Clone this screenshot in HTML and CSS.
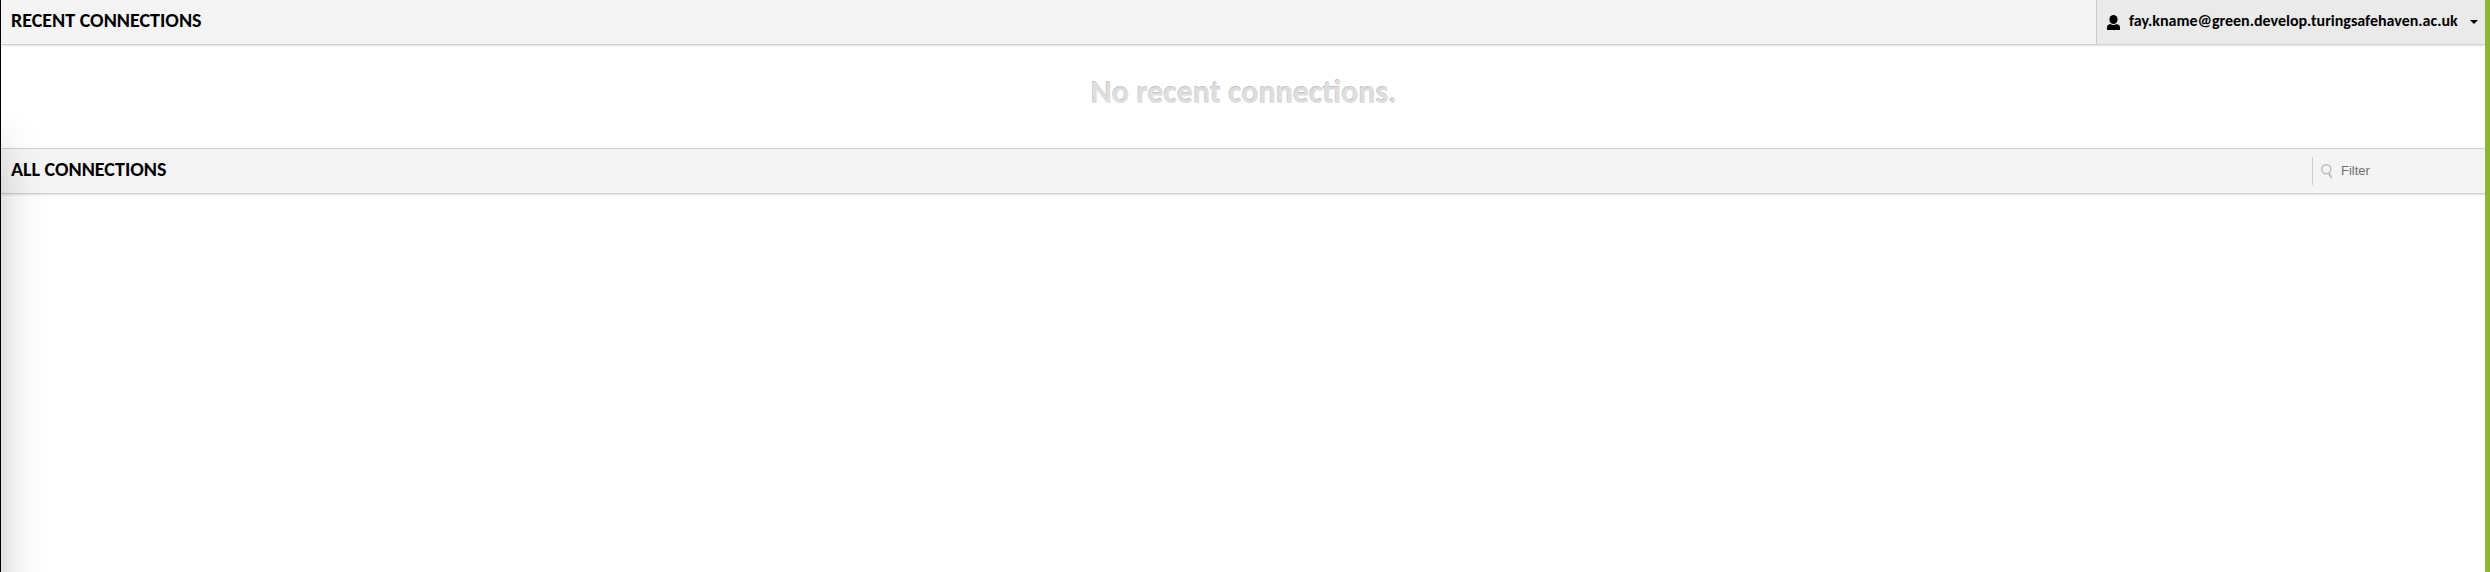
FILE: index.html
```
<!DOCTYPE html>
<html lang="en">
<head>
<meta charset="utf-8">
<title>Connections</title>
<link rel="stylesheet" href="styles.css">
</head>
<body>
<div class="page">
  <header class="header header-recent">
    <h2 class="title">RECENT CONNECTIONS</h2>
    <div class="user-menu">
      <svg class="user-icon" viewBox="0 0 13 15"><ellipse cx="6.5" cy="4.5" rx="4.1" ry="4.5"/><path d="M0 15V12.4C0 10.4 1.4 9.3 3.4 9C5.2 10.2 7.8 10.2 9.6 9C11.6 9.3 13 10.4 13 12.4V15Z"/></svg>
      <span class="user-name">fay.kname@green.develop.turingsafehaven.ac.uk</span>
      <svg class="caret" viewBox="0 0 8 4"><path d="M0 0H8L4 4Z"/></svg>
    </div>
  </header>
  <section class="recent"><p class="empty">No recent connections.</p></section>
  <header class="header header-all">
    <h2 class="title">ALL CONNECTIONS</h2>
    <div class="filter">
      <svg class="search-icon" viewBox="0 0 12 15"><circle cx="5.3" cy="5.3" r="4.5"/><path class="handle" d="M7.8 9.2L10.6 14"/></svg>
      <input class="filter-input" type="text" placeholder="Filter" aria-label="Filter">
    </div>
  </header>
  <main class="list"></main>
  <div class="side-shadow"></div>
</div>
</body>
</html>
```
FILE: styles.css
```
* { box-sizing: border-box; }
body { margin: 0; background: #fff; color: #000; font-family: Carlito, Lato, sans-serif; }
.page { position: relative; display: flex; flex-direction: column; height: 572px; border-left: 1px solid #000; border-right: 5px solid #8db634; overflow: hidden; }
.header { display: flex; justify-content: space-between; flex: none; background: #f4f4f4; border-bottom: 1px solid #d0d0d0; box-shadow: 0 1px 2px rgba(0,0,0,.12); }
.header-recent { height: 45px; }
.header-all { height: 46px; border-top: 1px solid #d0d0d0; align-items: center; }
.title { align-self: flex-start; margin: 0; padding-left: 10px; font-size: 20px; line-height: 40px; font-weight: 700; white-space: nowrap; }
.user-menu { display: flex; align-items: center; width: 389px; padding: 0 7px 0 10px; background: #eaeaea; border-left: 1px solid #c8c8c8; }
.user-icon { width: 13px; height: 15px; }
.user-name { align-self: flex-start; margin-left: 9px; font-size: 16px; line-height: 41px; font-weight: 700; white-space: nowrap; }
.caret { width: 8px; height: 4px; margin-left: auto; }
.recent { flex: none; height: 103px; }
.empty { margin: 0; padding-left: 2px; text-align: center; font-size: 32px; line-height: 96px; font-weight: 700; color: #dedede; text-shadow: -.6px -.6px 0 #c4c4c4; }
.filter { display: flex; align-items: center; width: 173px; height: 28px; padding-left: 8px; border-left: 1px solid #d0d0d0; }
.search-icon { width: 12px; height: 15px; fill: none; stroke: #bdbdbd; stroke-width: 1.5; }
.handle { stroke-width: 2; }
.filter-input { width: 135px; margin-left: 8px; padding: 0 0 2px; border: 0; background: transparent; font: 13px "Liberation Sans", sans-serif; }
.filter-input::placeholder { color: #707070; }
.list { flex: 1; }
.side-shadow { position: absolute; left: 0; top: 110px; bottom: 0; width: 45px; background: linear-gradient(to right, rgba(0,0,0,.12), rgba(0,0,0,.055) 33%, rgba(0,0,0,.015) 65%, transparent); -webkit-mask-image: linear-gradient(to bottom, transparent, #000 95px); mask-image: linear-gradient(to bottom, transparent, #000 95px); }
```
